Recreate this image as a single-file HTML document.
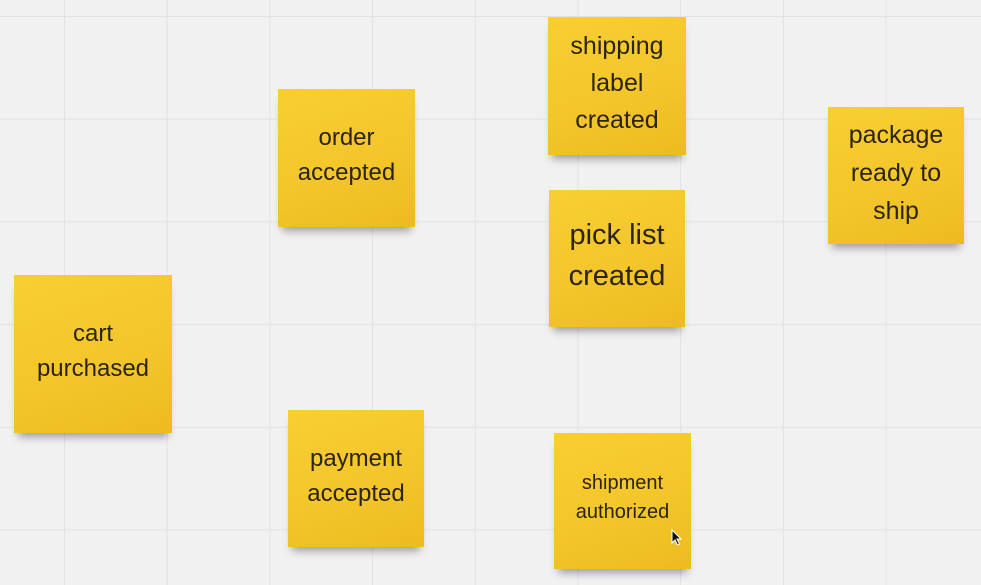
<!DOCTYPE html><html><head><style>
body{margin:0;width:981px;height:585px;overflow:hidden;background:#f1f1f1;
background-image:linear-gradient(to right,#e2e2e2 1px,transparent 1px),linear-gradient(to bottom,#e2e2e2 1px,transparent 1px);
background-size:102.7px 102.7px;background-position:64px 16px;font-family:"Liberation Sans","DejaVu Sans",sans-serif;position:relative}
.n{position:absolute;box-sizing:border-box;padding-bottom:6px;background:linear-gradient(160deg,#f8cf33,#f3c52a 60%,#ecbb1f);display:flex;align-items:center;justify-content:center;text-align:center;color:#2b2410;font-size:24px;line-height:35px;box-shadow:0 8px 8px -4px rgba(0,0,0,.35)}
</style></head><body>
<div class="n" style="left:14px;top:275px;width:158px;height:158px">cart<br>purchased</div>
<div class="n" style="left:278px;top:89px;width:137px;height:138px">order<br>accepted</div>
<div class="n" style="left:288px;top:410px;width:136px;height:137px">payment<br>accepted</div>
<div class="n" style="left:548px;top:17px;width:138px;height:138px;line-height:37px;font-size:25px">shipping<br>label<br>created</div>
<div class="n" style="left:549px;top:190px;width:136px;height:137px;font-size:29px;line-height:41px">pick list<br>created</div>
<div class="n" style="left:554px;top:433px;width:137px;height:136px;font-size:20px;line-height:29px">shipment<br>authorized</div>
<div class="n" style="left:828px;top:107px;width:136px;height:137px;font-size:25px;line-height:38px">package<br>ready to<br>ship</div>
<svg style="position:absolute;left:671px;top:529px" width="12" height="18" viewBox="0 0 12 18"><path d="M1 1 L1 14 L4 11 L6.5 16 L8.5 15 L6 10 L10 10 Z" fill="#111" stroke="#fff" stroke-width="1"/></svg>
</body></html>
